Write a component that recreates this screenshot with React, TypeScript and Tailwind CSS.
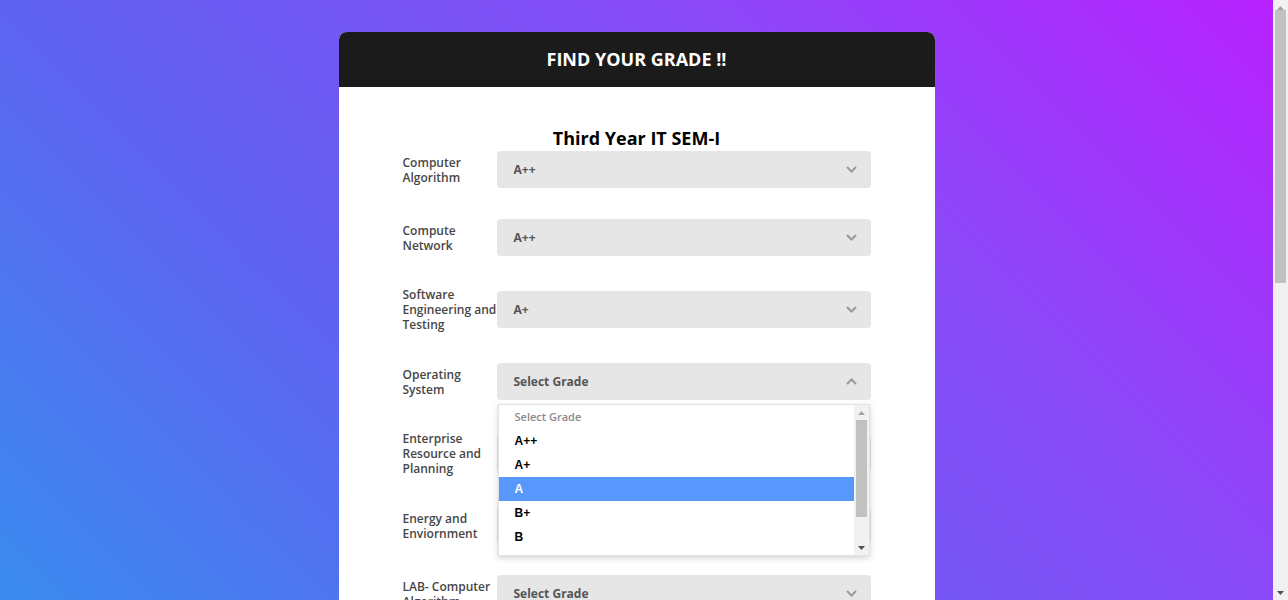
import { useState } from "react";

const grades = ["A++", "A+", "A", "B+", "B", "C", "P", "F"];

const subjects = [
  { name: "Computer Algorithm", value: "A++" },
  { name: "Compute Network", value: "A++" },
  { name: "Software Engineering and Testing", value: "A+" },
  { name: "Operating System", value: "", open: true },
  { name: "Enterprise Resource and Planning", value: "" },
  { name: "Energy and Enviornment", value: "" },
  { name: "LAB- Computer Algorithm", value: "" },
  { name: "LAB- Computer Network", value: "" },
  { name: "LAB- Operating System", value: "" },
  { name: "LAB- Software Engineering", value: "" },
  { name: "Seminar", value: "" },
  { name: "Mini Project", value: "" },
];

function Chevron({ up }: { up?: boolean }) {
  return (
    <svg width="11" height="7" viewBox="0 0 11 7" className="shrink-0">
      <polyline
        points={up ? "1,6 5.5,1.5 10,6" : "1,1 5.5,5.5 10,1"}
        fill="none"
        stroke="#9a9a9a"
        strokeWidth="2"
      />
    </svg>
  );
}

// classic scrollbar drawn by hand, the headless browser hides the native one
function Scrollbar({
  thumbTop,
  thumbHeight,
}: {
  thumbTop: number;
  thumbHeight: number;
}) {
  return (
    <div className="w-[15px] shrink-0 h-full bg-[#f1f1f1] flex flex-col">
      <div className="h-[15px] shrink-0 flex items-center justify-center">
        <svg width="7" height="4" viewBox="0 0 7 4">
          <polygon points="0,4 3.5,0 7,4" fill="#a3a3a3" />
        </svg>
      </div>
      <div className="flex-1 px-[2px]">
        <div
          className="bg-[#c1c1c1]"
          style={{ marginTop: thumbTop, height: thumbHeight }}
        />
      </div>
      <div className="h-[15px] shrink-0 flex items-center justify-center">
        <svg width="7" height="4" viewBox="0 0 7 4">
          <polygon points="0,0 7,0 3.5,4" fill="#505050" />
        </svg>
      </div>
    </div>
  );
}

function GradeList({ selected }: { selected: string }) {
  return (
    <div className="absolute left-px right-px top-[calc(100%+4px)] z-10 bg-white border border-[#e2e2e2] shadow-[0_2px_6px_rgba(0,0,0,0.18)]">
      <div className="h-[150px] flex overflow-hidden">
        <div className="flex-1">
          <div className="h-6 flex items-center pl-[16px] text-[11px] font-semibold text-[#8a8a8a]">
            Select Grade
          </div>
          {grades.map((g) => (
            <div
              key={g}
              className={`h-6 flex items-center pl-[16px] text-[12px] font-bold font-['Liberation_Sans',Arial,sans-serif] ${
                g === selected ? "bg-[#5897fb] text-white" : "text-black"
              }`}
            >
              {g}
            </div>
          ))}
        </div>
        <Scrollbar thumbTop={0} thumbHeight={97} />
      </div>
    </div>
  );
}

function GradeRow({
  name,
  value,
  open,
}: {
  name: string;
  value: string;
  open?: boolean;
}) {
  return (
    <div className="flex items-center">
      <label className="w-[94px] shrink-0 text-[12px] leading-[15px] font-semibold text-[#474747]">
        {name}
      </label>
      <div className="relative flex-1">
        <div className="h-[37px] rounded bg-[#e6e6e6] pl-[17px] pr-[14px] flex items-center justify-between">
          <span className="text-[12px] font-bold text-[#555]">
            {value || "Select Grade"}
          </span>
          <Chevron up={open} />
        </div>
        {open && <GradeList selected="A" />}
      </div>
    </div>
  );
}

export default function App() {
  const [result] = useState<string | null>(null);

  return (
    <div className="h-[600px] flex overflow-hidden font-['Open_Sans',sans-serif]">
      <main className="flex-1 h-full overflow-hidden bg-[linear-gradient(45deg,#3a8cf0_0%,#5e63f0_32%,#8a4af8_68%,#b721ff_100%)] pt-8">
        <div className="mx-auto w-[596px] rounded-lg bg-white overflow-hidden">
          {/* Header */}
          <div className="h-[55px] bg-[#1b1b1b] flex items-center justify-center">
            <h1 className="text-[18px] font-bold text-white">FIND YOUR GRADE !!</h1>
          </div>

          {/* Form */}
          <div className="px-16 pt-[39px] pb-[70px]">
            <h2 className="text-center text-[18px] leading-[24px] font-bold text-black mb-px">
              Third Year IT SEM-I
            </h2>
            <div className="flex flex-col gap-[31px]">
              {subjects.map((s) => (
                <GradeRow key={s.name} name={s.name} value={s.value} open={s.open} />
              ))}
            </div>
            <div className="mt-10 flex justify-center">
              <button className="h-10 px-8 rounded bg-[#1b1b1b] text-white text-[14px] font-bold">
                CALCULATE
              </button>
            </div>
            <p className="mt-6 text-center text-[15px] font-semibold text-[#555]">
              {result ?? "Your SGPA will appear here"}
            </p>
          </div>
        </div>
      </main>
      <Scrollbar thumbTop={-5} thumbHeight={273} />
    </div>
  );
}
